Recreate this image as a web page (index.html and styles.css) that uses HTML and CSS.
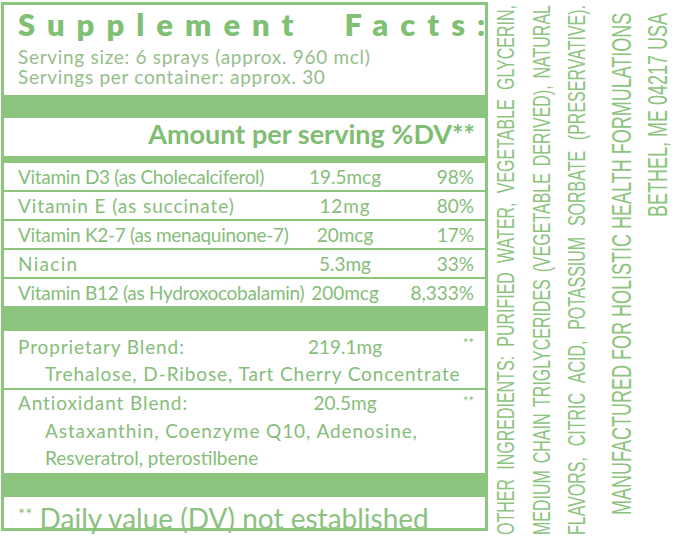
FILE: index.html
```html
<!DOCTYPE html>
<html lang="en">
<head>
<meta charset="utf-8">
<title>Supplement Facts</title>
<link rel="stylesheet" href="styles.css">
</head>
<body>
<div class="page">
  <section class="facts">
    <header class="head">
      <h1 class="title">Supplement Facts:</h1>
      <p class="serving first">Serving size: 6 sprays (approx. 960 mcl)</p>
      <p class="serving">Servings per container: approx. 30</p>
    </header>
    <div class="bar bar-1"></div>
    <div class="amount-head">Amount per serving %DV**</div>
    <div class="rule-thick"></div>
    <div class="nutrients">
      <div class="nutrient"><span class="name tight">Vitamin D3 (as Cholecalciferol)</span><span class="amt">19.5mcg</span><span class="dv">98%</span></div>
      <div class="nutrient"><span class="name wide">Vitamin E (as succinate)</span><span class="amt wide">12mg</span><span class="dv">80%</span></div>
      <div class="nutrient"><span class="name tight">Vitamin K2-7 (as menaquinone-7)</span><span class="amt">20mcg</span><span class="dv">17%</span></div>
      <div class="nutrient"><span class="name wider">Niacin</span><span class="amt">5.3mg</span><span class="dv">33%</span></div>
      <div class="nutrient"><span class="name tight">Vitamin B12 (as Hydroxocobalamin)</span><span class="amt">200mcg</span><span class="dv">8,333%</span></div>
    </div>
    <div class="bar bar-2"></div>
    <div class="blend blend-prop">
      <span class="name wide">Proprietary Blend:</span><span class="amt">219.1mg</span><span class="ast">**</span>
      <span class="sub wide">Trehalose, D-Ribose, Tart Cherry Concentrate</span>
    </div>
    <div class="blend blend-anti">
      <span class="name wide">Antioxidant Blend:</span><span class="amt">20.5mg</span><span class="ast">**</span>
      <span class="sub wide">Astaxanthin, Coenzyme Q10, Adenosine,</span>
      <span class="sub">Resveratrol, pterostilbene</span>
    </div>
    <div class="bar bar-3"></div>
    <p class="footnote"><span class="foot-ast">**</span> Daily value (DV) not established</p>
  </section>
  <aside class="ingredients-wrap">
    <div class="ingredients">
      <div class="ing-line">OTHER INGREDIENTS: PURIFIED WATER, VEGETABLE GLYCERIN,</div>
      <div class="ing-line">MEDIUM CHAIN TRIGLYCERIDES (VEGETABLE DERIVED), NATURAL</div>
      <div class="ing-line">FLAVORS, CITRIC ACID, POTASSIUM SORBATE (PRESERVATIVE).</div>
      <div class="ing-line end gap">MANUFACTURED FOR HOLISTIC HEALTH FORMULATIONS</div>
      <div class="ing-line end">BETHEL, ME 04217 USA</div>
    </div>
  </aside>
</div>
</body>
</html>
```

FILE: styles.css
```css
* { box-sizing: border-box; }

body {
  margin: 0;
  background: #ffffff;
  font-family: Lato, "Open Sans", sans-serif;
}

.page {
  display: flex;
  width: 679px;
  height: 540px;
  overflow: hidden;
}

.facts {
  flex: none;
  margin: 2px 0 0 1px;
  width: 487px;
  height: 529px;
  border: 3px solid #8cc67e;
  display: flex;
  flex-direction: column;
  color: #86bd7a;
}

.head {
  height: 90px;
  padding: 2px 0 0 14px;
  flex: none;
}

.title {
  margin: 0;
  font-size: 31px;
  line-height: 34px;
  font-weight: 800;
  letter-spacing: 12px;
  word-spacing: 20px;
  color: #80c074;
  white-space: nowrap;
}

.serving {
  margin: 0;
  font-size: 19px;
  line-height: 20px;
  letter-spacing: 0.7px;
  color: #95be8b;
  white-space: nowrap;
}

.serving.first { margin-top: 6px; }

.bar { background: #8cc67e; flex: none; }
.bar-1 { height: 23px; }
.bar-2 { height: 25px; }
.bar-3 { height: 24px; }

.amount-head {
  flex: none;
  height: 38px;
  padding: 1px 10px 0 0;
  text-align: right;
  font-size: 27px;
  line-height: 30px;
  font-weight: 700;
  color: #7fbd72;
  white-space: nowrap;
}

.rule-thick {
  flex: none;
  height: 7px;
  background: #8cc67e;
}

.nutrients { flex: none; }

.nutrient {
  display: grid;
  grid-template-columns: 285px 84px 1fr;
  height: 27px;
  padding: 0 11px 0 14px;
  font-size: 19px;
  line-height: 27px;
  white-space: nowrap;
}

.nutrient + .nutrient {
  height: 29px;
  border-top: 2px solid #8cc67e;
}

.tight { letter-spacing: -0.3px; }
.wide { letter-spacing: 0.9px; }
.wider { letter-spacing: 1.3px; }

.amt { text-align: center; }
.dv { text-align: right; }

.blend {
  flex: none;
  display: grid;
  grid-template-columns: 285px 84px 1fr;
  padding: 0 11px 0 14px;
  font-size: 19px;
  white-space: nowrap;
}

.blend .sub {
  grid-column: 1 / -1;
  padding-left: 27px;
}

.blend .ast {
  text-align: right;
  font-size: 13px;
  line-height: 18px;
  align-self: start;
}

.blend-prop {
  height: 59px;
  padding-top: 3px;
  line-height: 26px;
  border-bottom: 2px solid #8cc67e;
}

.blend-anti {
  height: 83px;
  line-height: 25px;
}

.blend-anti .ast { margin-top: 2px; }

.footnote {
  flex: none;
  margin: 0;
  height: 31px;
  padding: 4px 0 0 14px;
  font-size: 28px;
  line-height: 28px;
  white-space: nowrap;
  color: #8cc180;
}

.foot-ast {
  font-size: 17px;
  vertical-align: 8px;
}

.ingredients-wrap {
  flex: 1;
  display: flex;
  align-items: flex-start;
}

.ingredients {
  margin: 5px 0 0 32px;
  height: 530px;
  writing-mode: vertical-rl;
  transform: rotate(180deg) scaleX(1.5);
  font-family: "Liberation Sans", Arial, sans-serif;
  font-size: 16px;
  color: #8cc47e;
  white-space: nowrap;
}

.ing-line {
  line-height: 23.5px;
  text-align: justify;
  text-align-last: justify;
}

.ing-line.end {
  text-align: end;
  text-align-last: end;
  font-size: 18px;
  padding-inline-end: 8px;
}

.ing-line.gap { margin-block-start: 7.5px; }
```
